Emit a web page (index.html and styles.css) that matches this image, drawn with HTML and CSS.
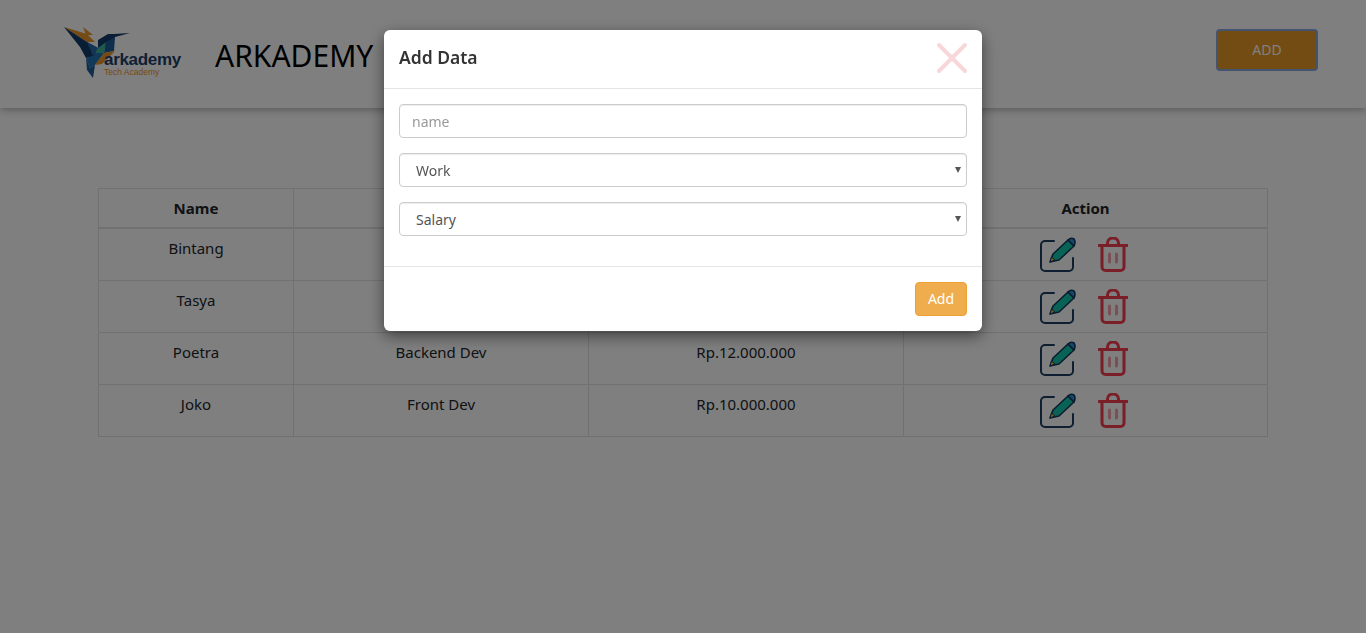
FILE: index.html
```html
<!DOCTYPE html>
<html lang="en">
<head>
  <meta charset="UTF-8" />
  <meta name="viewport" content="width=device-width, initial-scale=1" />
  <title>Arkademy</title>
  <link rel="stylesheet" href="styles.css">
</head>
<body>
  <header class="topbar">
    <div class="logo">
      <svg class="logo-bird" width="125" height="65" viewBox="0 0 125 65">
        <polygon points="4,7 27,14 35,22 27,22" fill="#e8962a"/>
        <polygon points="23,7 33,15 26,15" fill="#e8962a"/>
        <polygon points="4,7 27,22 38,28 35,36 26,38 20,27" fill="#123a68"/>
        <polygon points="27,22 38,28 33,36" fill="#2a6aa8"/>
        <polygon points="38,20 48,14 54,14 70,13 55,17 50,24 38,28" fill="#123a68"/>
        <polygon points="38,28 46,22 44,33 35,33" fill="#3fb39a"/>
        <polygon points="46,22 55,17 54,31 44,33" fill="#1d5c96"/>
        <polygon points="26,38 33,36 35,33 44,33 35,45 30,48" fill="#2272b5"/>
        <polygon points="44,33 55,31 42,44 35,45" fill="#e8962a"/>
        <polygon points="26,38 30,48 35,45 33,58 27,50" fill="#1d5c96"/>
      </svg>
      <span class="logo-name">arkademy</span>
      <span class="logo-sub">Tech Academy</span>
    </div>
    <h1>ARKADEMY</h1>
    <button class="btn-add-top">ADD</button>
  </header>

  <main>
    <table class="data-table">
      <thead>
        <tr><th class="col-name">Name</th><th class="col-work">Work</th><th class="col-salary">Salary</th><th>Action</th></tr>
      </thead>
      <tbody>
        <tr>
          <td>Bintang</td><td>Front Dev</td><td>Rp.10.000.000</td>
          <td><div class="actions">
            <svg width="36" height="35" viewBox="0 0 36 35"><use href="#icon-edit"/></svg>
            <svg width="30" height="35" viewBox="0 0 30 35"><use href="#icon-trash"/></svg>
          </div></td>
        </tr>
        <tr>
          <td>Tasya</td><td>Backend Dev</td><td>Rp.12.000.000</td>
          <td><div class="actions">
            <svg width="36" height="35" viewBox="0 0 36 35"><use href="#icon-edit"/></svg>
            <svg width="30" height="35" viewBox="0 0 30 35"><use href="#icon-trash"/></svg>
          </div></td>
        </tr>
        <tr>
          <td>Poetra</td><td>Backend Dev</td><td>Rp.12.000.000</td>
          <td><div class="actions">
            <svg width="36" height="35" viewBox="0 0 36 35"><use href="#icon-edit"/></svg>
            <svg width="30" height="35" viewBox="0 0 30 35"><use href="#icon-trash"/></svg>
          </div></td>
        </tr>
        <tr>
          <td>Joko</td><td>Front Dev</td><td>Rp.10.000.000</td>
          <td><div class="actions">
            <svg width="36" height="35" viewBox="0 0 36 35"><use href="#icon-edit"/></svg>
            <svg width="30" height="35" viewBox="0 0 30 35"><use href="#icon-trash"/></svg>
          </div></td>
        </tr>
      </tbody>
    </table>
  </main>

  <div class="backdrop">
    <div class="modal">
      <div class="modal-header">
        <h2>Add Data</h2>
        <svg class="close" width="32" height="32" viewBox="0 0 32 32">
          <path d="M3 3 L29 29 M29 3 L3 29" fill="none" stroke="#f8d7da" stroke-width="4" stroke-linecap="round"/>
        </svg>
      </div>
      <div class="modal-body">
        <input class="field" type="text" placeholder="name" />
        <div class="select-wrap">
          <select class="field"><option>Work</option></select>
        </div>
        <div class="select-wrap">
          <select class="field"><option>Salary</option></select>
        </div>
      </div>
      <div class="modal-footer">
        <button class="btn-add">Add</button>
      </div>
    </div>
  </div>

  <svg class="icon-defs" width="0" height="0">
    <symbol id="icon-edit" viewBox="0 0 36 35">
      <path d="M14 4 H5 a4 4 0 0 0 -4 4 V30 a4 4 0 0 0 4 4 H29 a4 4 0 0 0 4 -4 V21" fill="none" stroke="#1d3f63" stroke-width="2" stroke-linecap="round"/>
      <path d="M10 25 L13 17 L28 3 L34 9 L19 23 Z" fill="#12c4ad" stroke="#123a5c" stroke-width="1.6" stroke-linejoin="round"/>
      <path d="M28 3 Q31 0 34 2 Q36 5 34 9 Z" fill="#2f8fe0" stroke="#123a5c" stroke-width="1.6" stroke-linejoin="round"/>
      <path d="M10 25 L11.5 20 L15 23 Z" fill="#f2bd3a" stroke="#123a5c" stroke-width="1"/>
    </symbol>
    <symbol id="icon-trash" viewBox="0 0 30 35">
      <path d="M1 8.5 H29" fill="none" stroke="#f43c50" stroke-width="3" stroke-linecap="round"/>
      <path d="M9.5 8 V6 a5.5 5 0 0 1 11 0 V8" fill="none" stroke="#f43c50" stroke-width="3"/>
      <path d="M4 9 V30 a3.5 3.5 0 0 0 3.5 3.5 H22.5 a3.5 3.5 0 0 0 3.5 -3.5 V9" fill="none" stroke="#f43c50" stroke-width="3"/>
      <path d="M11.5 17 V25 M18.5 17 V25" fill="none" stroke="#f4a0aa" stroke-width="3" stroke-linecap="round"/>
    </symbol>
  </svg>
</body>
</html>
```

FILE: styles.css
```css
body {
  margin: 0; font-family: "Noto Sans", "Open Sans", sans-serif; background-color: #fff; color: #212529;
  font-size: 15px; line-height: 24px;
}
.topbar {
  display: flex; align-items: center;
  height: 108px; padding: 0 48px 0 60px; box-sizing: border-box;
  background: #fff;
  box-shadow: 0 2px 8px rgba(0, 0, 0, .3);
}
.logo {
  position: relative; width: 125px; height: 65px; margin-right: 30px; margin-top: -3px;
}
.logo-bird {
  display: block;
}
.logo-name {
  position: absolute; left: 44px; top: 30px;
  font: bold 17px/20px "Liberation Sans", sans-serif; letter-spacing: -0.3px; color: #1d3f6b;
}
.logo-sub {
  position: absolute; left: 44px; top: 47px;
  font: 8.5px/10px "Liberation Sans", sans-serif; color: #e8962a;
}
.topbar h1 {
  margin: 4px 0 0; font-size: 30px; font-weight: 400; line-height: 36px; color: #000;
}
.btn-add-top {
  margin-left: auto; margin-top: -8px;
  width: 102px; height: 42px;
  background: #e69826; color: #fff;
  border: 2px solid #88a8e0; border-radius: 4px;
  font: inherit; font-size: 14px;
}
main {
  padding-top: 80px;
}
.data-table {
  width: 1170px; margin: 0 auto; border-collapse: collapse; table-layout: fixed;
}
.data-table th, .data-table td {
  box-sizing: border-box;
  border: 1px solid #dee2e6; padding: 7px 12px 8px; text-align: center; vertical-align: top;
}
.data-table th {
  border-bottom-width: 2px; padding: 7px 12px; font-weight: 700;
}
.col-name { width: 195px; }
.col-work { width: 295px; }
.col-salary { width: 315px; }
.actions {
  display: flex; justify-content: center; gap: 22px; height: 35px; margin-top: 1px;
  transform: translateX(-2px);
}
.backdrop {
  position: fixed; inset: 0;
  background: rgba(0, 0, 0, .5);
}
.modal {
  width: 598px; margin: 30px auto 0 384px; box-sizing: border-box;
  background: #fff; border-radius: 6px;
  box-shadow: 0 5px 15px rgba(0, 0, 0, .5);
}
.modal-header {
  display: flex; align-items: center; justify-content: space-between;
  height: 59px; padding: 0 14px 4px 15px; box-sizing: border-box;
  border-bottom: 1px solid #e5e5e5;
}
.modal-header h2 {
  margin: 0; font-size: 17.5px; font-weight: 600; color: #333;
}
.close {
  margin-top: 1px;
}
.modal-body {
  display: flex; flex-direction: column; gap: 15px;
  padding: 15px 15px 30px;
}
.field {
  display: block; width: 100%; height: 34px; box-sizing: border-box;
  padding: 0 12px; background: #fff;
  border: 1px solid #ccc; border-radius: 4px;
  box-shadow: inset 0 1px 1px rgba(0, 0, 0, .075);
  font: inherit; font-size: 14px; color: #555;
  appearance: none;
}
.field::placeholder {
  color: #999;
}
select.field {
  padding: 2px 0 0 16px;
}
.select-wrap {
  position: relative;
}
.select-wrap::after {
  content: ""; position: absolute; right: 6px; top: 14px;
  border-top: 6px solid #555; border-left: 3.5px solid transparent; border-right: 3.5px solid transparent;
}
.modal-footer {
  display: flex; justify-content: flex-end;
  padding: 15px; border-top: 1px solid #e5e5e5;
}
.btn-add {
  width: 52px; height: 34px;
  background: #f0ad4e; color: #fff;
  border: 1px solid #eea236; border-radius: 4px;
  font: inherit; font-size: 14px;
}
.icon-defs {
  position: absolute;
}
```
